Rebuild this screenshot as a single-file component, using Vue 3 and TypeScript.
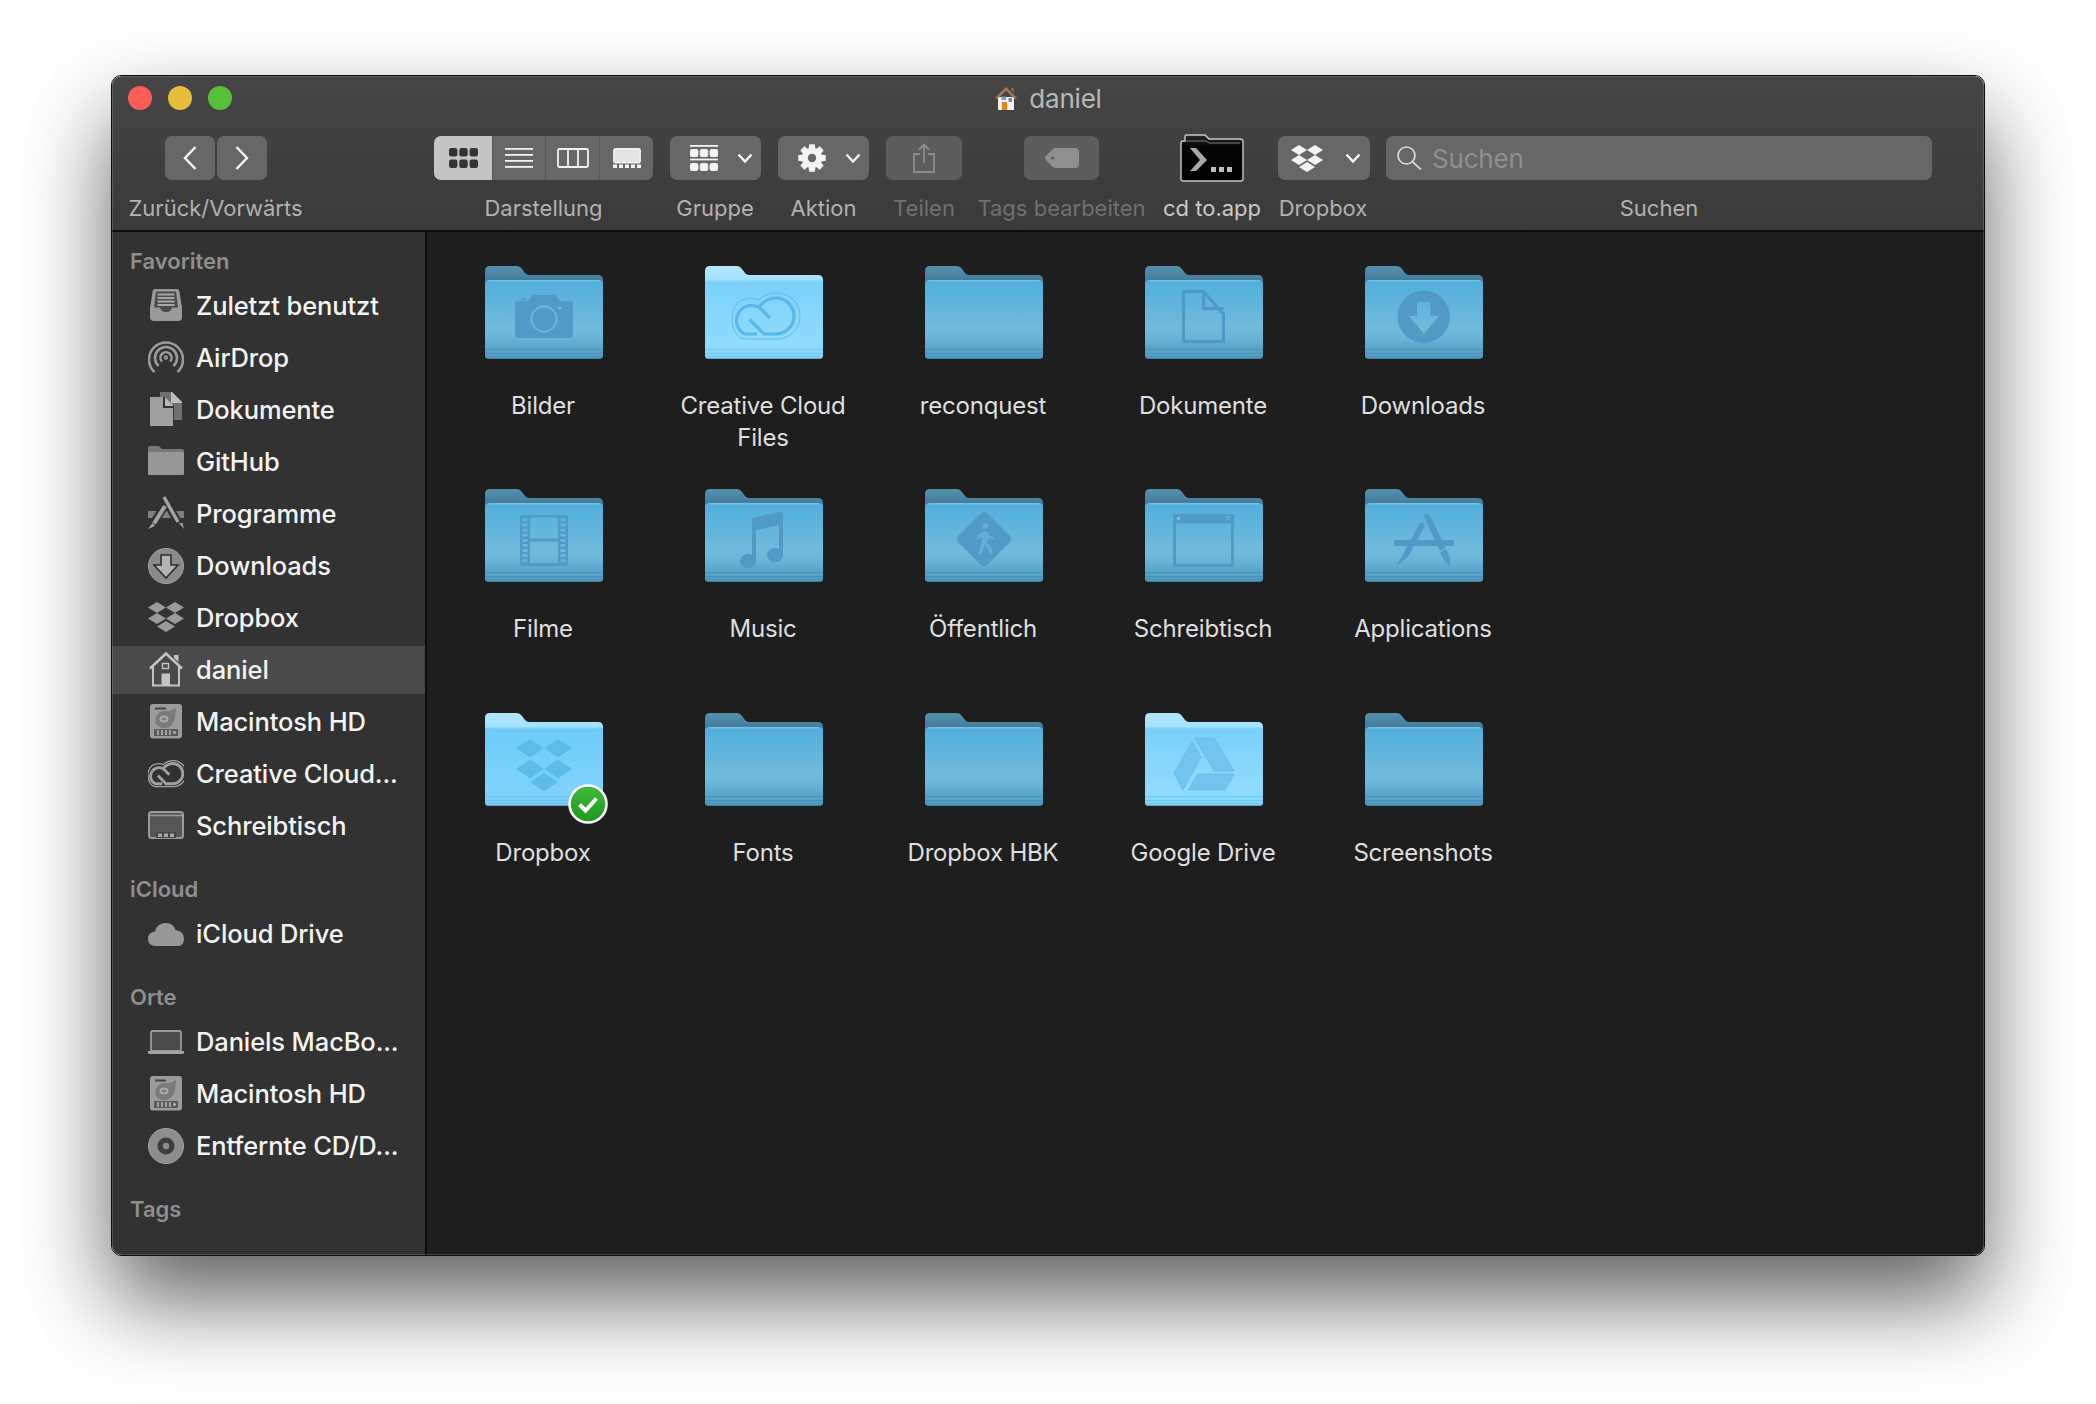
<script setup lang="ts">
interface SideItem { icon: string; label: string; selected?: boolean }
interface SideSection { title: string; items: SideItem[] }
interface Folder { name: string; glyph: string; light?: boolean; badge?: boolean }

const sections: SideSection[] = [
  {
    title: 'Favoriten',
    items: [
      { icon: 'recent', label: 'Zuletzt benutzt' },
      { icon: 'airdrop', label: 'AirDrop' },
      { icon: 'docs', label: 'Dokumente' },
      { icon: 'folder', label: 'GitHub' },
      { icon: 'apps', label: 'Programme' },
      { icon: 'download', label: 'Downloads' },
      { icon: 'dropbox', label: 'Dropbox' },
      { icon: 'home', label: 'daniel', selected: true },
      { icon: 'hd', label: 'Macintosh HD' },
      { icon: 'cc', label: 'Creative Cloud...' },
      { icon: 'desktop', label: 'Schreibtisch' },
    ],
  },
  { title: 'iCloud', items: [{ icon: 'cloud', label: 'iCloud Drive' }] },
  {
    title: 'Orte',
    items: [
      { icon: 'laptop', label: 'Daniels MacBo...' },
      { icon: 'hd', label: 'Macintosh HD' },
      { icon: 'cd', label: 'Entfernte CD/D...' },
    ],
  },
  { title: 'Tags', items: [] },
]

const folders: Folder[] = [
  { name: 'Bilder', glyph: 'camera' },
  { name: 'Creative Cloud Files', glyph: 'cc', light: true },
  { name: 'reconquest', glyph: '' },
  { name: 'Dokumente', glyph: 'doc' },
  { name: 'Downloads', glyph: 'download' },
  { name: 'Filme', glyph: 'film' },
  { name: 'Music', glyph: 'music' },
  { name: 'Öffentlich', glyph: 'public' },
  { name: 'Schreibtisch', glyph: 'window' },
  { name: 'Applications', glyph: 'apps' },
  { name: 'Dropbox', glyph: 'dropbox', light: true, badge: true },
  { name: 'Fonts', glyph: '' },
  { name: 'Dropbox HBK', glyph: '' },
  { name: 'Google Drive', glyph: 'drive', light: true },
  { name: 'Screenshots', glyph: '' },
]

function filmPath(): string {
  let d = 'M35 26H83V77H35Z M45 28.5H73V49.5H45Z M45 52.5H73V74H45Z '
  for (let i = 0; i < 9; i++) {
    const y = 29.5 + i * 5.1
    d += `M37.5 ${y}H42.5V${y + 2.8}H37.5Z M75.5 ${y}H80.5V${y + 2.8}H75.5Z `
  }
  return d
}
const film = filmPath()

function gearPath(cx: number, cy: number, ro: number, ri: number): string {
  const teeth = 8
  let d = ''
  for (let i = 0; i < teeth; i++) {
    const a = (i / teeth) * Math.PI * 2
    const w = 0.24
    const pts: [number, number][] = [
      [ri, a - w - 0.12],
      [ro, a - w + 0.04],
      [ro, a + w - 0.04],
      [ri, a + w + 0.12],
    ]
    for (const [r, t] of pts) {
      const x = (cx + r * Math.sin(t)).toFixed(2)
      const y = (cy - r * Math.cos(t)).toFixed(2)
      d += `${d ? 'L' : 'M'}${x} ${y}`
    }
  }
  return d + 'Z'
}
const gear = gearPath(14, 14, 14, 10)

const dropboxDiamonds = 'M8 0L16 5L8 10L0 5Z M24 0L32 5L24 10L16 5Z M8 10L16 15L8 20L0 15Z M24 10L32 15L24 20L16 15Z M16 17L24 22L16 27L8 22Z'
</script>

<template>
  <div class="desk">
    <div class="window">
      <header class="chrome">
        <div class="titlebar">
          <div class="lights">
            <span class="light red"></span>
            <span class="light yellow"></span>
            <span class="light green"></span>
          </div>
          <div class="title">
            <svg class="title-icon" width="24" height="24" viewBox="0 0 24 24">
              <path d="M4 11H20V24H4Z" fill="#f1f1f1" />
              <path d="M1 12L12 1L23 12L20.5 13L12 4.5L3.5 13Z" fill="#a9784d" />
              <path d="M17 2H20V7L17 4Z" fill="#8d6440" />
              <path d="M8 16H13V24H8Z" fill="#e8801d" />
              <path d="M14.5 12H18V16H14.5Z" fill="#6d8bad" />
              <path d="M7.5 10.5H12V14H7.5Z" fill="#7d9abc" />
            </svg>
            <span>daniel</span>
          </div>
          <div></div>
        </div>

        <div class="toolbar">
          <div class="tool tool-nav">
            <div class="ctl nav">
              <div class="btn nav-btn">
                <svg width="14" height="24" viewBox="0 0 14 24"><path d="M12.5 1L2 12L12.5 23" class="stroke-w" /></svg>
              </div>
              <div class="btn nav-btn">
                <svg width="14" height="24" viewBox="0 0 14 24"><path d="M1.5 1L12 12L1.5 23" class="stroke-w" /></svg>
              </div>
            </div>
            <span class="tool-label">Zurück/Vorwärts</span>
          </div>

          <div class="tool tool-view">
            <div class="ctl seg">
              <div class="seg-item seg-on seg-a">
                <svg width="29" height="20" viewBox="0 0 29 20" fill="#333">
                  <rect x="0" y="0" width="8.4" height="8.4" rx="2.2" />
                  <rect x="10.3" y="0" width="8.4" height="8.4" rx="2.2" />
                  <rect x="20.6" y="0" width="8.4" height="8.4" rx="2.2" />
                  <rect x="0" y="11.6" width="8.4" height="8.4" rx="2.2" />
                  <rect x="10.3" y="11.6" width="8.4" height="8.4" rx="2.2" />
                  <rect x="20.6" y="11.6" width="8.4" height="8.4" rx="2.2" />
                </svg>
              </div>
              <div class="seg-item seg-b">
                <svg width="28" height="20" viewBox="0 0 28 20" fill="#f2f2f2">
                  <rect y="0" width="28" height="1.8" />
                  <rect y="6" width="28" height="1.8" />
                  <rect y="12" width="28" height="1.8" />
                  <rect y="18" width="28" height="1.8" />
                </svg>
              </div>
              <div class="seg-item seg-c">
                <svg width="32" height="20" viewBox="0 0 32 20" fill="none" stroke="#f2f2f2" stroke-width="1.8">
                  <rect x="1" y="1" width="30" height="18" rx="1.5" />
                  <path d="M11 1V19M21 1V19" />
                </svg>
              </div>
              <div class="seg-item seg-c">
                <svg width="28" height="20" viewBox="0 0 28 20">
                  <rect x="0.8" y="0.8" width="26.4" height="14" rx="1.5" fill="#e4e4e4" stroke="#f2f2f2" stroke-width="1.4" />
                  <g fill="#f2f2f2">
                    <rect x="0" y="16.5" width="4" height="3.5" />
                    <rect x="6" y="16.5" width="4" height="3.5" />
                    <rect x="12" y="16.5" width="4" height="3.5" />
                    <rect x="18" y="16.5" width="4" height="3.5" />
                    <rect x="24" y="16.5" width="4" height="3.5" />
                  </g>
                </svg>
              </div>
            </div>
            <span class="tool-label">Darstellung</span>
          </div>

          <div class="tool tool-group">
            <div class="ctl btn dd dd-icon">
              <svg width="28" height="26" viewBox="0 0 28 26" fill="#f2f2f2">
                <rect y="0" width="28" height="1.8" />
                <rect x="0" y="4" width="8.4" height="8" rx="2" />
                <rect x="9.8" y="4" width="8.4" height="8" rx="2" />
                <rect x="19.6" y="4" width="8.4" height="8" rx="2" />
                <rect y="13.6" width="28" height="1.8" />
                <rect x="0" y="18" width="8.4" height="8" rx="2" />
                <rect x="9.8" y="18" width="8.4" height="8" rx="2" />
                <rect x="19.6" y="18" width="8.4" height="8" rx="2" />
              </svg>
              <svg width="16" height="10" viewBox="0 0 16 10"><path d="M1.5 1.5L8 8.5L14.5 1.5" class="stroke-w" /></svg>
            </div>
            <span class="tool-label">Gruppe</span>
          </div>

          <div class="tool tool-action">
            <div class="ctl btn dd dd-icon">
              <svg width="28" height="28" viewBox="0 0 28 28">
                <path :d="gear" fill="#f4f4f4" />
                <circle cx="14" cy="14" r="4.2" fill="#666" />
              </svg>
              <svg width="16" height="10" viewBox="0 0 16 10"><path d="M1.5 1.5L8 8.5L14.5 1.5" class="stroke-w" /></svg>
            </div>
            <span class="tool-label">Aktion</span>
          </div>

          <div class="tool tool-share">
            <div class="ctl btn btn-off">
              <svg width="22" height="30" viewBox="0 0 22 30" fill="none" stroke="#8d8d8d" stroke-width="1.8">
                <path d="M7 11H1V29H21V11H15" />
                <path d="M11 20V1.5M6 6.5L11 1.5L16 6.5" />
              </svg>
            </div>
            <span class="tool-label off">Teilen</span>
          </div>

          <div class="tool tool-tags">
            <div class="ctl btn btn-off tag-btn">
              <svg width="34" height="20" viewBox="0 0 34 20">
                <path d="M11 0H30Q34 0 34 4V16Q34 20 30 20H11Q9 20 7.5 18.8L1 12Q-1 10 1 8L7.5 1.2Q9 0 11 0Z" fill="#8f8f8f" />
                <circle cx="7.5" cy="10" r="1.6" fill="#5f5f5f" />
              </svg>
            </div>
            <span class="tool-label off">Tags bearbeiten</span>
          </div>

          <div class="tool tool-cd">
            <div class="ctl">
              <svg width="64" height="48" viewBox="0 0 64 48">
                <defs>
                  <linearGradient id="cd-body" x1="0" y1="0" x2="0" y2="1">
                    <stop offset="0" stop-color="#2a2a2a" />
                    <stop offset="0.25" stop-color="#060606" />
                    <stop offset="1" stop-color="#000" />
                  </linearGradient>
                </defs>
                <path d="M3 7H5V2.5Q5 1 6.5 1H25L29 5H60Q63 5 63 8V45Q63 47 61 47H3Q1 47 1 45V9Q1 7 3 7Z" fill="url(#cd-body)" stroke="#c9c9c9" stroke-width="1.4" />
                <path d="M5 7H26L29 9H60" fill="none" stroke="#7d7d7d" stroke-width="1" />
                <path d="M10 14H16L27 26L16 37H10L20 26Z" fill="#a9a9a9" />
                <g fill="#bdbdbd"><rect x="31" y="33" width="5" height="5" /><rect x="39" y="33" width="5" height="5" /><rect x="47" y="33" width="5" height="5" /></g>
              </svg>
            </div>
            <span class="tool-label bright">cd to.app</span>
          </div>

          <div class="tool tool-dropbox">
            <div class="ctl btn dd dd-box">
              <svg width="32" height="27" viewBox="0 0 32 27"><path :d="dropboxDiamonds" fill="#f4f4f4" /></svg>
              <svg width="16" height="10" viewBox="0 0 16 10"><path d="M1.5 1.5L8 8.5L14.5 1.5" class="stroke-w" /></svg>
            </div>
            <span class="tool-label label-dropbox">Dropbox</span>
          </div>

          <div class="tool tool-search">
            <div class="ctl btn search">
              <svg width="25" height="24" viewBox="0 0 25 24" fill="none" stroke="#dcdcdc" stroke-width="1.7">
                <circle cx="9.5" cy="9.5" r="8.5" />
                <path d="M15.5 15.8L24 23.5" />
              </svg>
              <span class="search-text">Suchen</span>
            </div>
            <span class="tool-label">Suchen</span>
          </div>
        </div>
      </header>

      <div class="main">
        <aside class="sidebar">
          <section v-for="s in sections" :key="s.title" class="section">
            <h3 class="section-title">{{ s.title }}</h3>
            <div v-for="it in s.items" :key="it.label + s.title" class="row" :class="{ selected: it.selected }">
              <svg class="side-icon" width="36" height="36" viewBox="0 0 36 36">
                <g v-if="it.icon === 'recent'">
                  <path d="M7 1H29Q31 1 31.3 3L34 20V29Q34 33 30 33H6Q2 33 2 29V20L4.7 3Q5 1 7 1Z" fill="#9a9a9a" />
                  <path d="M8 3.5H28L30 19.5H24Q23 24 18 24T12 19.5H6Z" fill="#4a4a4a" />
                  <path d="M9.5 6.5H26.5M9.5 10H26.5M9.5 13.5H26.5M9.5 17H26.5" stroke="#a8a8a8" stroke-width="2" />
                </g>
                <g v-else-if="it.icon === 'airdrop'" fill="none" stroke="#9a9a9a" stroke-width="2.6">
                  <path d="M6.5 32A17 17 0 1 1 29.5 32" />
                  <path d="M10.5 26A11 11 0 1 1 25.5 26" />
                  <path d="M14 21.5A5.5 5.5 0 1 1 22 21.5" />
                  <circle cx="18" cy="17.5" r="1.4" stroke-width="1.6" />
                </g>
                <g v-else-if="it.icon === 'docs'">
                  <path d="M12 0H24L34 10V28H26V14L17 5H12Z" fill="#707070" />
                  <path d="M23 0H24L34 10V11H23Z" fill="#bdbdbd" />
                  <path d="M2 5H15V16H25V34H2Z" fill="#a0a0a0" />
                  <path d="M17 5L25 13V14H17Z" fill="#b8b8b8" />
                </g>
                <g v-else-if="it.icon === 'folder'">
                  <path d="M2 2H11L14 5H34Q36 5 36 7V12H0V4Q0 2 2 2Z" fill="#787878" />
                  <path d="M1.5 8H34.5Q36 8 36 9.5V29.5Q36 31 34.5 31H1.5Q0 31 0 29.5V9.5Q0 8 1.5 8Z" fill="#979797" />
                </g>
                <g v-else-if="it.icon === 'apps'">
                  <path d="M0 15H36V22H0Z" fill="#808080" />
                  <path d="M15.5 1L30.5 27" stroke="#323232" stroke-width="8" />
                  <path d="M16.8 10L5.5 27" stroke="#323232" stroke-width="8" />
                  <path d="M16 1L30 26" stroke="#a5a5a5" stroke-width="3.4" />
                  <path d="M31 27L36 33L34.5 27Z" fill="#a5a5a5" />
                  <path d="M17 10L6 27.5" stroke="#a5a5a5" stroke-width="4" />
                  <path d="M4.5 27L0 33L7 30Z" fill="#a5a5a5" />
                </g>
                <g v-else-if="it.icon === 'download'">
                  <circle cx="18" cy="18" r="17.5" fill="#8a8a8a" stroke="#a3a3a3" stroke-width="1" />
                  <path d="M13 7H23V17H30L18 30L6 17H13Z" fill="#b3b3b3" stroke="#2e2e2e" stroke-width="1.6" />
                </g>
                <g v-else-if="it.icon === 'dropbox'">
                  <path d="M9 2L18 7.5L9 13L0 7.5Z M27 2L36 7.5L27 13L18 7.5Z M9 13L18 18.5L9 24L0 18.5Z M27 13L36 18.5L27 24L18 18.5Z M18 21L27 26.5L18 32L9 26.5Z" fill="#9a9a9a" />
                </g>
                <g v-else-if="it.icon === 'home'">
                  <path d="M2 16.5L18 1.5L34 16.5" fill="none" stroke="#c4c4c4" stroke-width="2.6" />
                  <path d="M26 3H30.5V10L26 6Z" fill="#c4c4c4" />
                  <path d="M5 15V33.5H31V15" fill="none" stroke="#c4c4c4" stroke-width="2" />
                  <path d="M13.5 21.5H22V33.5H13.5Z" fill="#c4c4c4" />
                  <rect x="14.5" y="11.5" width="6" height="5" fill="none" stroke="#c4c4c4" stroke-width="1.4" />
                </g>
                <g v-else-if="it.icon === 'hd'">
                  <rect x="2" y="0" width="32" height="34.5" rx="3" fill="#9b9b9b" />
                  <path d="M6 25H30V32H6Z" fill="#5a5a5a" />
                  <path d="M10 26V31M14 26V31M18 26V31M22 26V31" stroke="#b5b5b5" stroke-width="1.6" />
                  <circle cx="26.5" cy="28.5" r="1.4" fill="#b5b5b5" />
                  <path d="M7 4.5H18" stroke="#444" stroke-width="2" />
                  <path d="M17 7Q9 7 7.5 15T16 24Q25 24 27 14L28 3Q24 8 17 7Z" fill="#7a7a7a" />
                  <ellipse cx="16" cy="15" rx="3.5" ry="2.6" fill="none" stroke="#ababab" stroke-width="2" />
                </g>
                <g v-else-if="it.icon === 'cc'" fill="none" stroke="#a0a0a0" transform="translate(-15.2 -10.5) scale(0.5625)">
                  <path d="M40 73H72A22 22 0 0 0 72 27C64 27 58 30 54 34C50 32 46 32 41 33C32 34 27 43 27 53C27 64 33 73 40 73Z" stroke-width="2.2" />
                  <path d="M44.5 53.5L59 68H71A18 18 0 0 0 71 32C63 32 58 36 54 41L65 52" stroke-width="5" />
                  <path d="M53 41A13.5 13.5 0 1 0 40 68H52" stroke-width="5" />
                </g>
                <g v-else-if="it.icon === 'desktop'">
                  <rect x="1" y="4" width="34" height="26" rx="2.5" fill="#565656" stroke="#9a9a9a" stroke-width="2" />
                  <path d="M1 7.5H35" stroke="#9a9a9a" stroke-width="1.5" />
                  <path d="M8 24H28V30H8Z" fill="#444" />
                  <path d="M10 25.5H14V29H10ZM16 25.5H20V29H16ZM22 25.5H26V29H22Z" fill="#a8a8a8" />
                </g>
                <g v-else-if="it.icon === 'cloud'">
                  <path d="M8 30Q0 30 0 23T7 15.5Q9 7 18 7Q25 7 27.5 14Q36 15 36 23T28 30Z" fill="#979797" />
                </g>
                <g v-else-if="it.icon === 'laptop'">
                  <rect x="3" y="7" width="30" height="20" rx="1.5" fill="#4b4b4b" stroke="#9a9a9a" stroke-width="1.8" />
                  <path d="M0 27H36V28.5Q36 30 34 30H2Q0 30 0 28.5Z" fill="#a3a3a3" />
                </g>
                <g v-else-if="it.icon === 'cd'">
                  <circle cx="18" cy="18" r="17.5" fill="#8d8d8d" stroke="#a5a5a5" stroke-width="1" />
                  <circle cx="18" cy="18" r="8.5" fill="#3e3e3e" />
                  <circle cx="18" cy="18" r="3.2" fill="#8d8d8d" />
                </g>
              </svg>
              <span class="row-text">{{ it.label }}</span>
            </div>
          </section>
        </aside>

        <main class="content">
          <div v-for="(f, i) in folders" :key="f.name" class="cell">
            <div class="folder-wrap">
              <svg class="folder" width="118" height="94" viewBox="0 0 118 94" :class="f.light ? 'tint-light' : 'tint-dark'">
                <defs>
                  <linearGradient :id="'back' + i" x1="0" y1="0" x2="0" y2="1">
                    <stop offset="0" :stop-color="f.light ? '#b2e6ff' : '#5592ae'" />
                    <stop offset="0.25" :stop-color="f.light ? '#a3e1fe' : '#437b9b'" />
                  </linearGradient>
                  <linearGradient :id="'front' + i" x1="0" y1="0" x2="0" y2="1">
                    <template v-if="f.light">
                      <stop offset="0" :stop-color="f.badge ? '#6ecbf8' : '#79d0fa'" />
                      <stop offset="0.8" :stop-color="f.badge ? '#7fd3fb' : '#8fdcfd'" />
                      <stop offset="1" :stop-color="f.badge ? '#76cdf8' : '#80d4fa'" />
                    </template>
                    <template v-else>
                      <stop offset="0" stop-color="#50afdc" />
                      <stop offset="0.6" stop-color="#70badc" />
                      <stop offset="0.72" stop-color="#6bb5d8" />
                      <stop offset="0.86" stop-color="#58a5ca" />
                      <stop offset="1" stop-color="#4e9cc2" />
                    </template>
                  </linearGradient>
                </defs>
                <path d="M5 0H32Q35 0 37 3L40 7Q41.5 9 44 9H113Q118 9 118 14V60H0V5Q0 0 5 0Z" :fill="`url(#back${i})`" />
                <path d="M3.5 14.3H114.5Q118 14.3 118 18V89.5Q118 92.7 115 92.7H3Q0 92.7 0 89.5V18Q0 14.3 3.5 14.3Z" :fill="`url(#front${i})`" />
                <path d="M3.5 14.8H114.5" :stroke="f.light ? '#93dcfd' : '#8ccbe8'" stroke-width="1" />
                <path d="M0 83.5H118M0 87.5H118M0 90.6H118" :stroke="f.light ? '#64bdee' : '#3f8bb2'" stroke-width="1" stroke-opacity="0.6" />

                <g class="glyph">
                  <g v-if="f.glyph === 'camera'">
                    <path d="M34 35H43L46 31Q47 29 49 29H69Q71 29 72 31L75 35H85Q88 35 88 38V69Q88 72 85 72H33Q30 72 30 69V38Q30 35 33 35ZM36 32H41V34H36Z" />
                    <circle cx="59" cy="53" r="12.5" class="glyph-line" />
                    <circle cx="75" cy="42" r="1.5" class="glyph-dot" />
                  </g>
                  <g v-else-if="f.glyph === 'cc'" class="cc-lines">
                    <path d="M40 73H72A22 22 0 0 0 72 27C64 27 58 30 54 34C50 32 46 32 41 33C32 34 27 43 27 53C27 64 33 73 40 73Z" stroke-width="0.9" />
                    <path d="M44.5 53.5L59 68H71A18 18 0 0 0 71 32C63 32 58 36 54 41L65 52" stroke-width="3.2" />
                    <path d="M53 41A13.5 13.5 0 1 0 40 68H52" stroke-width="3.2" />
                  </g>
                  <g v-else-if="f.glyph === 'doc'" class="doc-lines">
                    <path d="M38.5 25.5H58.5L78.5 48V75.5H38.5Z" stroke-width="3" />
                    <path d="M58.5 25.5V42.5H78.5" stroke-width="3" />
                  </g>
                  <g v-else-if="f.glyph === 'download'">
                    <path fill-rule="evenodd" d="M58.7 24.5A26.2 26.2 0 1 1 58.6 24.5Z M52 36V50H44L59 68L74 50H65.5V36Z" />
                  </g>
                  <path v-else-if="f.glyph === 'film'" fill-rule="evenodd" :d="film" />
                  <path v-else-if="f.glyph === 'music'" d="M47 31Q47 29 49 28.5L75 23Q78 22.5 78 25V66A8 7 0 1 1 74 60V36L51 41V72A8 7 0 1 1 47 66Z" />
                  <g v-else-if="f.glyph === 'public'">
                    <path d="M55.5 24.5Q59 21.5 62.5 24.5L84.5 46.5Q87.5 50 84.5 53.5L62.5 75.5Q59 78.5 55.5 75.5L33.5 53.5Q30.5 50 33.5 46.5Z" />
                    <g class="public-man">
                      <circle cx="60.5" cy="37" r="2.8" />
                      <path d="M55 44L61 41.5L65 47L69 49L68 51L63.5 49L62 54L66 58L68 65H65L63 60L59.5 56.5L56.5 65H53.5L57.5 50L55.5 47L53 50.5L51 49.5Z" />
                    </g>
                  </g>
                  <g v-else-if="f.glyph === 'window'">
                    <path fill-rule="evenodd" d="M30 25H87Q89 25 89 27V76Q89 78 87 78H30Q28 78 28 76V27Q28 25 30 25ZM31 34.5V75H86V34.5Z" />
                    <circle cx="33.5" cy="29.5" r="1.8" class="glyph-dot" />
                    <circle cx="83" cy="29" r="1.8" class="win-search" />
                  </g>
                  <g v-else-if="f.glyph === 'apps'">
                    <path d="M29 51H89V57H29Z" />
                    <path d="M55 34L38 65L31 77L42.5 68.5L59.5 38Q60 33 55 34Z" />
                    <path d="M59 28Q60 23 65 26L80.5 59L75 62Z" />
                    <path d="M75 63L81 60Q86 68 85 77Q78 72 75 63Z" />
                  </g>
                  <path v-else-if="f.glyph === 'dropbox'" d="M45 26L59 35L45 44.5L31 35Z M73 26L87 35L73 44.5L59 35Z M45 46.5L59 56L45 65.5L31 56Z M73 46.5L87 56L73 65.5L59 56Z M59 59.5L73 69L59 78.5L45 69Z" />
                  <path v-else-if="f.glyph === 'drive'" class="drive-shape" d="M50 25H69L89 58H69ZM47 29L56 44L38 77L29 60ZM53 61H89L80 77H43Z" />
                </g>
              </svg>
              <svg v-if="f.badge" class="badge" width="40" height="40" viewBox="0 0 40 40">
                <defs>
                  <linearGradient id="badge-green" x1="0" y1="0" x2="0" y2="1">
                    <stop offset="0" stop-color="#3dbb3c" />
                    <stop offset="1" stop-color="#1f981f" />
                  </linearGradient>
                </defs>
                <circle cx="20" cy="20" r="18.5" fill="url(#badge-green)" stroke="#fff" stroke-width="2.6" />
                <path d="M11.5 20.5L17.5 26.5L28.5 14.5" fill="none" stroke="#fff" stroke-width="4" />
              </svg>
            </div>
            <div class="folder-label">{{ f.name }}</div>
          </div>
        </main>
      </div>
    </div>
  </div>
</template>

<style>
html, body {
  margin: 0;
  background: #fff;
}
</style>

<style scoped>
.desk {
  box-sizing: border-box;
  width: 2096px;
  height: 1404px;
  padding: 75px 0 0 111px;
  overflow: hidden;
  background: #fff;
}
.window {
  position: relative;
  box-sizing: border-box;
  width: 1874px;
  height: 1181px;
  border: 1px solid #0c0c0c;
  border-radius: 10px;
  display: flex;
  flex-direction: column;
  box-shadow: 0 44px 88px rgba(0, 0, 0, 0.62);
  font-family: Inter, "Liberation Sans", sans-serif;
  -webkit-font-smoothing: antialiased;
}
.window::after {
  content: "";
  position: absolute;
  inset: 0;
  border-radius: 9px;
  pointer-events: none;
  box-shadow: inset 0 0 0 1px rgba(255, 255, 255, 0.16);
}
.chrome {
  height: 154px;
  flex: none;
  background: linear-gradient(#454545, #3a3a3a);
  border-bottom: 2px solid #0c0c0c;
  border-radius: 9px 9px 0 0;
  box-sizing: content-box;
}
.titlebar {
  height: 44px;
  display: grid;
  grid-template-columns: 1fr auto 1fr;
  align-items: center;
}
.lights {
  display: flex;
  gap: 16px;
  padding-left: 16px;
}
.light {
  width: 24px;
  height: 24px;
  border-radius: 50%;
}
.red { background: #fc5e57; }
.yellow { background: #e5bf3c; }
.green { background: #57c038; }
.title {
  display: flex;
  align-items: center;
  gap: 11px;
  font-size: 26px;
  color: #b8b8b8;
  letter-spacing: -0.2px;
}
.toolbar {
  display: flex;
  gap: 16px;
  padding: 16px 0 0 17px;
}
.tool {
  display: flex;
  flex-direction: column;
  align-items: center;
  flex: none;
}
.tool-nav { width: 173px; margin-right: 116px; }
.tool-view { width: 219px; }
.tool-group { width: 92px; }
.tool-action { width: 93px; }
.tool-share { width: 76px; }
.tool-tags { width: 167px; margin-right: 2px; }
.tool-cd { width: 98px; margin-right: 1px; }
.tool-dropbox { width: 92px; }
.tool-search { width: 546px; }
.ctl {
  height: 44px;
  flex: none;
  display: flex;
  align-items: center;
  justify-content: center;
}
.tool-label {
  margin-top: 14px;
  line-height: 28px;
  font-size: 22px;
  color: #b2b2b2;
  white-space: nowrap;
}
.tool-label.off { color: #707070; }
.tool-label.bright { color: #cacaca; }
.label-dropbox { margin-right: 2px; }
.btn {
  background: #676767;
  border-radius: 7px;
}
.btn-off { background: #5d5d5d; }
.stroke-w {
  fill: none;
  stroke: #f4f4f4;
  stroke-width: 2.4;
}
.nav { gap: 2px; }
.nav-btn {
  width: 50px;
  height: 44px;
  display: flex;
  align-items: center;
  justify-content: center;
}
.seg {
  width: 219px;
  gap: 1px;
  border-radius: 7px;
  overflow: hidden;
  background: #575757;
}
.seg-item {
  height: 44px;
  display: flex;
  align-items: center;
  justify-content: center;
  background: #676767;
}
.seg-a { width: 58px; }
.seg-b { width: 52px; }
.seg-c { width: 53px; flex: 1; }
.seg-on { background: #c4c4c4; }
.dd {
  justify-content: flex-start;
  box-sizing: border-box;
}
.dd-icon { padding-left: 20px; gap: 19px; width: 91px; }
.dd-box { padding-left: 13px; gap: 22px; width: 92px; }
.tool-share .btn { width: 76px; }
.tag-btn { width: 75px; }
.search {
  width: 546px;
  box-sizing: border-box;
  padding-left: 11px;
  justify-content: flex-start;
  gap: 10px;
}
.search-text {
  font-size: 26px;
  color: #8f8f8f;
  letter-spacing: -0.2px;
}
.main {
  flex: 1;
  min-height: 0;
  display: flex;
  border-radius: 0 0 9px 9px;
  overflow: hidden;
}
.sidebar {
  width: 315px;
  flex: none;
  box-sizing: border-box;
  background: #323232;
  border-right: 2px solid #0c0c0c;
  padding-top: 13px;
  display: flex;
  flex-direction: column;
  gap: 23px;
}
.section {
  display: flex;
  flex-direction: column;
  gap: 4px;
}
.section-title {
  margin: 0;
  height: 33px;
  line-height: 33px;
  padding-left: 18px;
  font-size: 22px;
  font-weight: 600;
  color: #8e8e8e;
}
.row {
  height: 48px;
  display: flex;
  align-items: center;
  gap: 12px;
  padding-left: 36px;
}
.row.selected { background: #4a4a4a; }
.side-icon { flex: none; }
.row-text {
  padding-bottom: 2px;
  font-size: 25.5px;
  font-weight: 450;
  color: #f3f3f3;
  white-space: nowrap;
  letter-spacing: -0.12px;
}
.content {
  flex: 1;
  background: #1e1e1e;
  padding: 34px 0 0 7px;
  display: grid;
  grid-template-columns: repeat(5, 220px);
  grid-template-rows: 223px 224px 224px;
  align-content: start;
}
.cell {
  display: flex;
  flex-direction: column;
  align-items: center;
}
.folder-wrap {
  position: relative;
  width: 118px;
  height: 94px;
}
.folder { display: block; }
.badge {
  position: absolute;
  left: 83px;
  top: 71px;
}
.folder-label {
  margin: 30px 2px 0 0;
  width: 190px;
  text-align: center;
  font-size: 24px;
  line-height: 32px;
  color: #dfdfdf;
  letter-spacing: -0.2px;
}
.tint-dark .glyph { fill: #4f9bc6; }
.tint-light .glyph { fill: #5fbcea; }
.tint-light .drive-shape { fill: #70c4ee; stroke: #62baea; stroke-width: 0.8; }
.tint-dark .glyph-line { fill: none; stroke: #6ab7db; stroke-width: 2; }
.glyph-dot { fill: #73bfe0; }
.win-search { fill: none; stroke: #6ab7db; stroke-width: 1; }
.tint-light .cc-lines { fill: none; stroke: #58b8ea; }
.tint-dark .doc-lines { fill: none; stroke: #4e9ac6; }
.public-man { fill: #62aed6; }
</style>
